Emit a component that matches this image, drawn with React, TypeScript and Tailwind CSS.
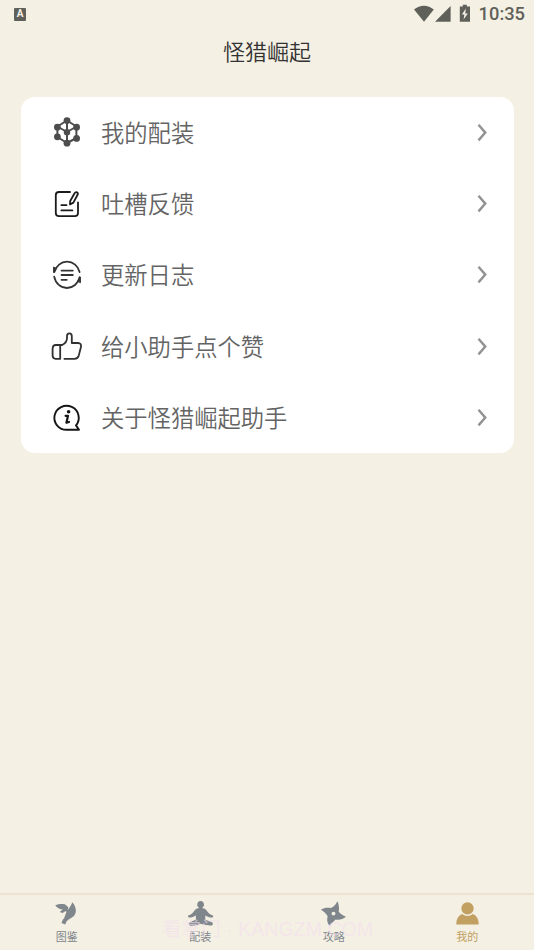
import { ReactNode } from "react";

const strokeProps = {
  width: 32,
  height: 32,
  viewBox: "0 0 32 32",
  fill: "none",
  strokeLinecap: "round" as const,
  strokeLinejoin: "round" as const,
};

const CubeIcon = () => (
  <svg {...strokeProps} className="-mt-px" stroke="#4d4d4d" strokeWidth="2">
    <path d="M16 4.5L25.4 10.5V22L16 27L6.4 21V10.5L16 4.5ZM6.4 10.5L16 16L25.6 10.5M16 4.5V27" />
    <g fill="#4d4d4d" stroke="none">
      <circle cx="16" cy="4.6" r="3.4" />
      <circle cx="25.6" cy="11.2" r="3.4" />
      <circle cx="25.6" cy="22.4" r="3.4" />
      <circle cx="16" cy="27.2" r="3.4" />
      <circle cx="6.4" cy="20.8" r="3.4" />
      <circle cx="6.4" cy="11.2" r="3.4" />
      <circle cx="16" cy="16.2" r="3.2" />
    </g>
  </svg>
);

const NoteIcon = () => (
  <svg {...strokeProps} stroke="#1b1b1b" strokeWidth="1.8">
    <path d="M19 4H8Q4.8 4 4.8 7.2V25Q4.8 28.2 8 28.2H23.8Q27 28.2 27 25V14.5" />
    <path d="M23.6 5.2Q24.6 3.6 26 4.4Q27.4 5.2 26.6 6.8L22.4 14.6L19 16.4L19.2 13Z" />
    <path d="M10.4 17.2H15.5M10.4 22.4H21.4" />
  </svg>
);

const LogIcon = () => (
  <svg {...strokeProps} stroke="#333" strokeWidth="1.8">
    <path d="M3.4 13C5 7 10 2.7 16 2.7C22.2 2.7 27.2 7 28.6 13M28.6 18.2C27.2 24.6 22 29 16 29C9.8 29 4.6 24.6 3.2 17.6" />
    <path
      d="M2.6 8.4V13.6L5.2 9.8Z M29.4 23.4V18L26.8 21.8Z"
      fill="#333"
      strokeWidth="1"
    />
    <path d="M10.5 11.6H21.8M10.5 16H21.8M10.5 20.8H15.8" />
  </svg>
);

const LikeIcon = () => (
  <svg {...strokeProps} stroke="#303030" strokeWidth="1.8">
    <path d="M9.2 14V27.8H4.6Q1.6 27.8 1.6 24.6V18Q1.6 14 4.8 14H11.2C14.4 12.4 16 10.4 16 7V5Q16 2.4 18.4 2.4Q20.8 2.4 20.8 5.2V12H27Q30.6 12.2 30 15.8L27.8 24.4Q26.8 27.8 23.6 27.8H13.4" />
  </svg>
);

const InfoIcon = () => (
  <svg {...strokeProps} stroke="#151515" strokeWidth="1.9">
    <path d="M25 23.4A12.2 12 0 1 0 16 27.8H28L25 23.4Z" />
    <circle cx="17.6" cy="9.8" r="1.8" fill="#151515" stroke="none" />
    <path d="M14.6 13.8H17L15.4 20.8L18 20" strokeWidth="2.2" />
  </svg>
);

const items: { title: string; icon: ReactNode }[] = [
  { title: "我的配装", icon: <CubeIcon /> },
  { title: "吐槽反馈", icon: <NoteIcon /> },
  { title: "更新日志", icon: <LogIcon /> },
  { title: "给小助手点个赞", icon: <LikeIcon /> },
  { title: "关于怪猎崛起助手", icon: <InfoIcon /> },
];

const tabs: { title: string; icon: ReactNode; active?: boolean }[] = [
  {
    title: "图鉴",
    icon: (
      <path d="M1.2 5.4C4 3.8 7.6 3.6 10.4 4.2L13.8 7L12.6 11.6L10.6 10.8L8.4 12.4L5.4 11.6L8.4 9.2C6 9 3.4 8 1.2 5.4ZM17.6 2.2C19.6 4.4 20.8 7 21 9.8C21 12.4 20.2 14.4 18.6 15.8L13.4 19.2L12 20.6L10.8 23.6L7.2 22L8.4 19L9.8 17.2L12 11.4C14 8.4 16.6 5.6 17.6 2.2Z" />
    ),
  },
  {
    title: "配装",
    icon: (
      <path d="M12.1 1A3.3 3.3 0 0 1 14 7V8C16.4 8 17.4 9.4 18.6 11C20.2 13.2 22 14.2 24.4 15.2L23.6 16.8C21 17 18.6 16 16.6 14.8V18.8C19 20.2 21.4 20.4 23.4 21.6C24.6 23.6 23.4 24.6 21.4 24.6L15.6 23.8L12 22.8L8.6 24.2L2.8 24.8C.8 24.8 .2 23.4 1.2 21.6C3.2 20.4 5.2 20.4 7.6 18.8V14.8C5.6 16 3.2 17 .6 16.8L-.2 15.2C2.2 14.2 4 13.2 5.6 11C6.8 9.4 7.8 8 10.2 8V7A3.3 3.3 0 0 1 12.1 1Z" />
    ),
  },
  {
    title: "攻略",
    icon: (
      <path
        fillRule="evenodd"
        d="M15.8 1.2C17.4 4.8 17.6 8 17 11.4C19.2 13.8 21.2 15.2 24 16.2C20.8 18.8 17.8 19.4 14 18.8C12 20.6 10 22.4 8.4 25C5.8 22 5.4 19 6.4 15.6C4.8 12.8 2.6 10.8 -.2 9.4C3 7.2 6 7 9.6 7.8C12.6 6.2 14.4 4 15.8 1.2ZM12 11.2A1.9 1.9 0 1 0 12 15A1.9 1.9 0 1 0 12 11.2Z"
      />
    ),
  },
  {
    title: "我的",
    icon: (
      <>
        <circle cx="12" cy="8" r="5.9" />
        <path d="M1.2 23.6Q1.2 15.8 6.8 13.4Q12 17.4 17.2 13.4Q22.8 15.8 22.8 23.6Z" />
      </>
    ),
    active: true,
  },
];

const StatusBar = () => (
  <div className="flex h-7 items-center justify-between pl-3.5 pr-[9px] text-[#60605b]">
    <div className="flex h-[13px] w-3 flex-col items-center rounded-[1px] bg-[#60605b] font-['Roboto',sans-serif] text-[10px] leading-[12px] font-bold text-[#f4f0e3]">
      A
    </div>
    <div className="flex items-center">
      <svg
        className="-mt-0.5"
        width="60"
        height="20"
        viewBox="0 0 60 20"
        fill="currentColor"
      >
        <path d="M0 6.6C5.8 1.4 14 1.4 19.8 6.6L10 18.8Z" />
        <path d="M36.6 3V18.8H21Z" />
        <path
          fillRule="evenodd"
          d="M48.8 3.4V1.8H52.8V3.4H56V18.8H45.8V3.4ZM52 5.6L47.8 11.4H50.4L49.6 16.6L53.8 10.4H51.2Z"
        />
      </svg>
      <span className="ml-[5px] font-['Roboto',sans-serif] text-[18.3px] font-medium leading-5">
        10:35
      </span>
    </div>
  </div>
);

const TabBar = () => (
  <div className="relative grid h-[57px] grid-cols-4 border-t-2 border-[#efe2d3]">
    {tabs.map((t) => (
      <div
        key={t.title}
        className={`flex flex-col items-center pt-[5px] ${
          t.active ? "text-[#c1a062]" : "text-[#7f868c]"
        }`}
      >
        <svg
          className="overflow-visible"
          width="25"
          height="26"
          viewBox="0 0 24 25"
          fill="currentColor"
        >
          {t.icon}
        </svg>
        <span className="mt-[2px] text-[11px] leading-4">{t.title}</span>
      </div>
    ))}
    <span className="pointer-events-none absolute left-[162px] top-[22px] whitespace-nowrap font-['Liberation_Sans','Noto_Sans_CJK_SC',sans-serif] text-[19.6px] leading-6 text-[#f5dff0]/60">
      看掌门 · KANGZM.COM
    </span>
  </div>
);

const App = () => {
  return (
    <div className="flex h-[950px] w-full flex-col overflow-hidden bg-[#f4f0e3] font-['Noto_Sans_CJK_SC',sans-serif]">
      <StatusBar />
      <h1 className="h-[69px] text-center text-[22px] font-[350] leading-[44px] text-[#333]">
        怪猎崛起
      </h1>
      <div className="ml-[21px] mr-5 rounded-[14px] bg-white">
        {items.map((item) => (
          <div
            key={item.title}
            className="flex h-[71.3px] items-center pl-[30px] pr-[25px]"
          >
            {item.icon}
            <span className="-mt-0.5 ml-[18px] flex-1 text-[23.3px] font-[350] leading-8 text-[#646464]">
              {item.title}
            </span>
            <svg
              width="14"
              height="20"
              viewBox="0 0 14 20"
              fill="none"
              stroke="#929292"
              strokeWidth="2.4"
            >
              <path d="M3.5 1.8L10.3 9.6L3.5 17.4" />
            </svg>
          </div>
        ))}
      </div>
      <div className="flex-1" />
      <TabBar />
    </div>
  );
};

export default App;
